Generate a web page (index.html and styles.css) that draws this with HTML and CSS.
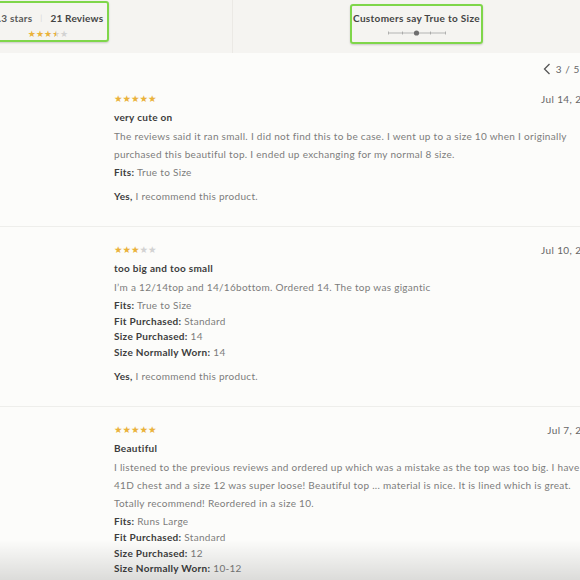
FILE: index.html
```html
<!DOCTYPE html>
<html>
<head>
<meta charset="utf-8">
<link rel="stylesheet" href="styles.css">
</head>
<body>
<div class="page">
  <header class="summary">
    <div class="cell">
      <div class="hl hl-rating">
        <div class="stat-line"><span class="stat">4.3 stars</span><span class="pipe">|</span><span class="stat strong">21 Reviews</span></div>
        <div class="stars small"><span class="on">★★★</span><span class="half">★</span><span class="off">★</span></div>
      </div>
    </div>
    <div class="cell cell-fit">
      <div class="hl hl-fit">
        <div class="stat-line"><span class="stat strong">Customers say True to Size</span></div>
        <svg class="slider" width="58" height="6" viewBox="0 0 58 6">
          <line x1="0.5" y1="3" x2="57.5" y2="3" stroke="#9a9a9a" stroke-width="0.7"/>
          <line x1="0.5" y1="1.5" x2="0.5" y2="4.5" stroke="#9a9a9a" stroke-width="0.7"/>
          <line x1="14.5" y1="1.5" x2="14.5" y2="4.5" stroke="#9a9a9a" stroke-width="0.7"/>
          <line x1="42.5" y1="1.5" x2="42.5" y2="4.5" stroke="#9a9a9a" stroke-width="0.7"/>
          <line x1="57.5" y1="1.5" x2="57.5" y2="4.5" stroke="#9a9a9a" stroke-width="0.7"/>
          <circle cx="28.5" cy="3" r="2.6" fill="#6f6f6f"/>
        </svg>
      </div>
    </div>
  </header>

  <div class="pager">
    <svg class="chev" width="8" height="12" viewBox="0 0 8 12"><path d="M6.5 1 L1.5 6 L6.5 11" fill="none" stroke="#555" stroke-width="1.3"/></svg>
    <span>3 / 5</span>
  </div>

  <section class="review">
    <div class="main">
      <div class="stars"><span class="on">★★★★★</span></div>
      <div class="title">very cute on</div>
      <div class="body">The reviews said it ran small. I did not find this to be case. I went up to a size 10 when I originally<br>purchased this beautiful top. I ended up exchanging for my normal 8 size.</div>
      <div class="details">
        <div><b>Fits:</b> True to Size</div>
      </div>
      <div class="rec"><b>Yes,</b> I recommend this product.</div>
    </div>
    <div class="date">Jul 14, 2019</div>
  </section>

  <section class="review">
    <div class="main">
      <div class="stars"><span class="on">★★★</span><span class="off">★★</span></div>
      <div class="title">too big and too small</div>
      <div class="body">I’m a 12/14top and 14/16bottom. Ordered 14. The top was gigantic</div>
      <div class="details">
        <div><b>Fits:</b> True to Size</div>
        <div><b>Fit Purchased:</b> Standard</div>
        <div><b>Size Purchased:</b> 14</div>
        <div><b>Size Normally Worn:</b> 14</div>
      </div>
      <div class="rec"><b>Yes,</b> I recommend this product.</div>
    </div>
    <div class="date">Jul 10, 2019</div>
  </section>

  <section class="review">
    <div class="main">
      <div class="stars"><span class="on">★★★★★</span></div>
      <div class="title">Beautiful</div>
      <div class="body">I listened to the previous reviews and ordered up which was a mistake as the top was too big. I have a<br>41D chest and a size 12 was super loose! Beautiful top ... material is nice. It is lined which is great.<br>Totally recommend! Reordered in a size 10.</div>
      <div class="details">
        <div><b>Fits:</b> Runs Large</div>
        <div><b>Fit Purchased:</b> Standard</div>
        <div><b>Size Purchased:</b> 12</div>
        <div><b>Size Normally Worn:</b> 10-12</div>
      </div>
      <div class="rec"><b>Yes,</b> I recommend this product.</div>
    </div>
    <div class="date">Jul 7, 2019</div>
  </section>
</div>
<div class="fade"></div>
</body>
</html>
```

FILE: styles.css
```css
html, body {
  margin: 0;
  padding: 0;
}
body {
  width: 580px;
  height: 580px;
  overflow: hidden;
  background: #fcfcfa;
  font-family: Lato, "Open Sans", sans-serif;
  color: #7a7a7a;
  font-size: 10px;
  position: relative;
}
.page {
  margin-left: -140px;
  width: 740px;
}
.summary {
  display: grid;
  grid-template-columns: 372px 368px;
  height: 53px;
  background: #f5f4f1;
}
.cell {
  display: flex;
  justify-content: center;
  align-items: flex-start;
}
.cell-fit {
  border-left: 1px solid #ebe9e5;
}
.hl {
  box-sizing: border-box;
  border: 2px solid #7fd64a;
  border-radius: 3px;
  box-shadow: 0 1px 2px rgba(0,0,0,0.18);
  display: flex;
  flex-direction: column;
  align-items: center;
}
.hl-rating {
  margin-top: 1px;
  width: 122px;
  height: 41px;
  padding-top: 9px;
  margin-left: 4px;
}
.hl-rating .stat-line {
  gap: 8px;
  letter-spacing: 0.2px;
}
.hl-fit {
  margin-top: 4px;
  width: 133px;
  height: 40px;
  padding-top: 6px;
}
.stat-line {
  display: flex;
  align-items: center;
  gap: 9px;
  line-height: 12px;
  font-size: 10px;
  letter-spacing: 0.32px;
  color: #555;
  white-space: nowrap;
}
.stat { font-weight: 700; color: #5a5a5a; }
.stat.strong { color: #444; }
.pipe { color: #d8d8d8; font-size: 8px; }
.slider { margin-top: 6px; display: block; }

.stars {
  font-family: "DejaVu Sans", sans-serif;
  font-size: 9.5px;
  line-height: 10px;
  height: 10px;
  letter-spacing: 0;
  white-space: nowrap;
}
.stars.small { margin-top: 5px; font-size: 9px; }
.stars .on { color: #eab23a; }
.stars .off { color: #d2d2d2; }
.stars .half {
  background: linear-gradient(90deg, #eab23a 50%, #d2d2d2 50%);
  -webkit-background-clip: text;
  background-clip: text;
  color: transparent;
}

.pager {
  height: 14px;
  display: flex;
  justify-content: flex-end;
  align-items: center;
  gap: 5px;
  padding-right: 20px;
  margin-top: 9px;
  color: #666;
  font-size: 10px;
  letter-spacing: 0.6px;
}
.chev { display: block; }

.review {
  display: flex;
  align-items: flex-start;
  padding: 18px 0 22px 254px;
  border-bottom: 1px solid #eeeeeb;
}
.review:last-child { border-bottom: none; }
.main {
  flex: 1 1 0;
  min-width: 0;
  display: flex;
  flex-direction: column;
}
.title {
  margin-top: 5px;
  line-height: 16px;
  font-weight: 700;
  color: #3d3d3d;
  letter-spacing: 0.3px;
}
.body {
  margin-top: 2px;
  margin-bottom: 2px;
  line-height: 18px;
  white-space: nowrap;
  letter-spacing: 0.3px;
  color: #7c7c7c;
}
.details div {
  line-height: 15.8px;
  letter-spacing: 0.3px;
  white-space: nowrap;
  color: #7c7c7c;
}
.details b, .rec b {
  color: #3d3d3d;
  font-weight: 700;
}
.rec {
  margin-top: 7px;
  line-height: 16px;
  letter-spacing: 0.3px;
  color: #7c7c7c;
}
.date {
  flex: 0 0 auto;
  line-height: 10px;
  color: #666;
  letter-spacing: 0.4px;
  white-space: nowrap;
}
.fade {
  position: absolute;
  left: 0;
  right: 0;
  bottom: 0;
  height: 40px;
  background: linear-gradient(rgba(0,0,0,0), rgba(0,0,0,0.13));
  pointer-events: none;
}
```
